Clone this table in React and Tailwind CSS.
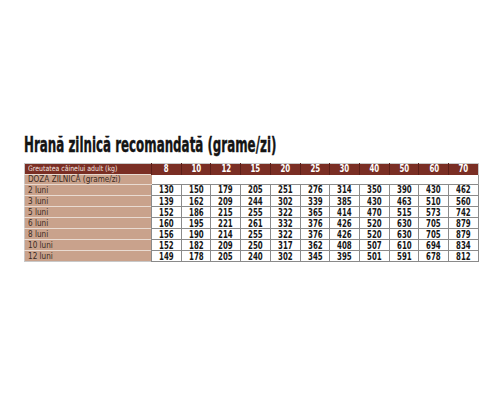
import React from "react";

const cols = [8, 10, 12, 15, 20, 25, 30, 40, 50, 60, 70];
const rows = [
  ["2 luni", [130, 150, 179, 205, 251, 276, 314, 350, 390, 430, 462], "h-[10px]", ""],
  ["3 luni", [139, 162, 209, 244, 302, 339, 385, 430, 463, 510, 560], "h-[11px]", "translate-y-[1px]"],
  ["5 luni", [152, 186, 215, 255, 322, 365, 414, 470, 515, 573, 742], "h-[9px]", "translate-y-[1px]"],
  ["6 luni", [160, 195, 221, 261, 332, 376, 426, 520, 630, 705, 879], "h-[9px]", "translate-y-[1px]"],
  ["8 luni", [156, 190, 214, 255, 322, 376, 426, 520, 630, 705, 879], "h-[9px]", "translate-y-[1px]"],
  ["10 luni", [152, 182, 209, 250, 317, 362, 408, 507, 610, 694, 834], "h-[9px]", "translate-y-[1px]"],
  ["12 luni", [149, 178, 205, 240, 302, 345, 395, 501, 591, 678, 812], "h-[9px]", "translate-y-[1px]"],
];

const font = { fontFamily: '"DejaVu Sans Condensed", "Liberation Sans", sans-serif' };

export default function App() {
  return (
    <div className="w-[500px] h-[400px] bg-white pt-[130px] pl-[24px]" style={font}>
      <h1 className="text-[22px] leading-[30px] font-bold text-[#141414] whitespace-nowrap">
        <span className="inline-block origin-left scale-x-[0.6] [-webkit-text-stroke:0.4px_#141414]">
          Hrană zilnică recomandată (grame/zi)
        </span>
      </h1>
      <table className="mt-[3px] w-[455px] table-fixed border-collapse border border-[#c8c8c8]">
        <colgroup>
          <col className="w-[127px]" />
          {cols.map((c) => (
            <col key={c} />
          ))}
        </colgroup>
        <tbody>
          <tr className="h-[11px] bg-[#7a2e24]">
            <td className="p-0 pl-[3px] text-[7.5px] leading-none text-[#f3e6e0] align-middle whitespace-nowrap">
              <span className="inline-block origin-left scale-x-[0.92]">Greutatea câinelui adult (kg)</span>
            </td>
            {cols.map((c) => (
              <td
                key={c}
                className="p-0 text-center text-[10px] leading-none font-bold text-white border-l border-[#5c1f18] align-middle"
              >
                <span className="inline-block scale-x-[0.78]">{c}</span>
              </td>
            ))}
          </tr>
          <tr className="h-[10px]">
            <td className="p-0 pl-[3px] bg-[#c9a28c] text-[9px] leading-none text-[#3b2a22] border-t border-[#e9dbd2] align-middle whitespace-nowrap">
              <span className="inline-block origin-left scale-x-[0.9]">DOZA ZILNICĂ (grame/zi)</span>
            </td>
            <td colSpan={11} className="p-0 bg-white border-r border-[#9a9a9a]" />
          </tr>
          {rows.map(([label, vals, h, shift]) => (
            <tr key={label} className={h}>
              <td className="p-0 pl-[3px] bg-[#c9a28c] text-[9px] leading-none text-[#3b2a22] border-t border-[#e9dbd2] align-middle whitespace-nowrap">
                <span className="inline-block origin-left scale-x-[0.9]">{label}</span>
              </td>
              {vals.map((v, i) => (
                <td
                  key={i}
                  className="p-0 text-center text-[10px] leading-none font-bold text-[#151515] border border-[#8a8a8a] align-bottom"
                >
                  <span className={`inline-block scale-x-[0.78] ${shift}`}>{v}</span>
                </td>
              ))}
            </tr>
          ))}
        </tbody>
      </table>
    </div>
  );
}
